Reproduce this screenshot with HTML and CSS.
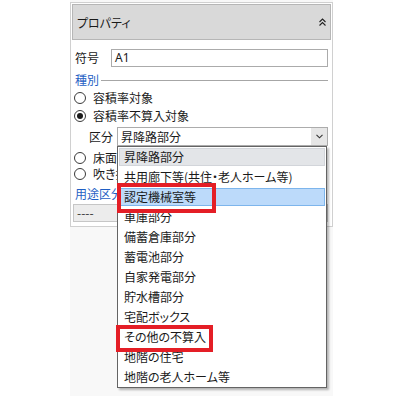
FILE: index.html
```html
<!DOCTYPE html>
<html lang="ja">
<head>
<meta charset="utf-8">
<link rel="stylesheet" href="styles.css">
</head>
<body>
<div class="pane">
  <div class="panel">
    <div class="header">
      <span class="title">プロパティ</span>
      <svg class="collapse" width="7" height="8" viewBox="0 0 7 8"><path d="M0.5 4 L3.5 1 L6.5 4 M0.5 7.5 L3.5 4.5 L6.5 7.5" fill="none" stroke="#222" stroke-width="1.1"/></svg>
    </div>
    <div class="body">
      <div class="row sign">
        <span class="label">符号</span>
        <div class="input">A1</div>
      </div>
      <div class="row group">
        <span class="group-title">種別</span>
        <span class="group-line"></span>
      </div>
      <div class="row radio-row tall"><span class="radio"></span><span>容積率対象</span></div>
      <div class="row radio-row tall"><span class="radio checked"></span><span>容積率不算入対象</span></div>
      <div class="row combo-row">
        <span class="label">区分</span>
        <div class="combo">
          <span class="combo-text">昇降路部分</span>
          <span class="combo-btn"><svg width="7" height="5" viewBox="0 0 7 5"><path d="M0.5 0.8 L3.5 3.8 L6.5 0.8" fill="none" stroke="#333" stroke-width="1.1"/></svg></span>
        </div>
      </div>
      <div class="row radio-row first-short"><span class="radio"></span><span>床面積不算入対象</span></div>
      <div class="row radio-row"><span class="radio"></span><span>吹き抜け</span></div>
      <div class="row group usage">
        <span class="group-title">用途区分</span>
      </div>
      <div class="select-box">----</div>
    </div>
  </div>

  <ul class="dropdown">
    <li class="item hover"><span>昇降路部分</span></li>
    <li class="item"><span>共用廊下等(共住・老人ホーム等)</span></li>
    <li class="item selected"><span>認定機械室等</span></li>
    <li class="item"><span>車庫部分</span></li>
    <li class="item"><span>備蓄倉庫部分</span></li>
    <li class="item"><span>蓄電池部分</span></li>
    <li class="item"><span>自家発電部分</span></li>
    <li class="item"><span>貯水槽部分</span></li>
    <li class="item"><span>宅配ボックス</span></li>
    <li class="item"><span>その他の不算入</span></li>
    <li class="item"><span>地階の住宅</span></li>
    <li class="item"><span>地階の老人ホーム等</span></li>
  </ul>

  <div class="mark mark-1"></div>
  <div class="mark mark-2"></div>
</div>
</body>
</html>
```

FILE: styles.css
```css
* { box-sizing: border-box; }

html, body {
  margin: 0;
  padding: 0;
  background: #ffffff;
}

body {
  font-family: "Noto Sans CJK JP", "Noto Sans", sans-serif;
  font-size: 12px;
  line-height: 18px;
  color: #1a1a1a;
  font-feature-settings: "palt";
}

.pane {
  position: relative;
  margin-left: 70px;
  width: 263px;
  height: 396px;
  padding-top: 2px;
  background: #f8f8f8;
}

.panel {
  width: 263px;
  height: 225px;
  border: 1px solid #d0d0d0;
  padding: 1px;
  background: #ffffff;
}

.header {
  display: flex;
  align-items: center;
  justify-content: space-between;
  height: 36px;
  border: 1px solid #b6b6b6;
  background: #d9d9d9;
  padding: 0 4px 0 4px;
}

.title {
  line-height: 18px;
  margin-top: 1px;
}

.collapse {
  display: block;
}

.body {
  padding: 9px 3px 0 1px;
}

.row {
  display: flex;
  align-items: center;
  margin-left: 2px;
}

.label {
  flex: none;
}

.sign {
  height: 18px;
}

.sign .label {
  width: 36px;
}

.input {
  flex: 1;
  height: 18px;
  border: 1px solid #ababab;
  padding-left: 3px;
  line-height: 16px;
  font-family: "Noto Sans", "Noto Sans CJK JP", sans-serif;
  font-size: 12px;
}

.group {
  height: 18px;
  margin-top: 4px;
}

.group-title {
  color: #1f5fc4;
  flex: none;
}

.group-line {
  flex: 1;
  height: 1px;
  background: #a6a6a6;
  margin-left: 2px;
  margin-top: 1px;
}

.radio-row {
  height: 16px;
}

.radio-row.tall {
  height: 18px;
}

.radio {
  flex: none;
  width: 12px;
  height: 12px;
  border: 1px solid #3a3a3a;
  border-radius: 50%;
  margin-left: -1px;
  margin-right: 7px;
  background: #fff;
  position: relative;
}

.radio.checked::after {
  content: "";
  position: absolute;
  left: 2px;
  top: 2px;
  width: 6px;
  height: 6px;
  border-radius: 50%;
  background: #1a1a1a;
}

.combo-row {
  margin-top: 2px;
  margin-left: 16px;
  height: 19px;
}

.combo-row .label {
  width: 28px;
}

.combo {
  flex: 1;
  display: flex;
  height: 19px;
  border: 1px solid #acacac;
  background: #fff;
}

.combo-text {
  flex: 1;
  padding-left: 3px;
  line-height: 17px;
}

.combo-btn {
  flex: none;
  width: 16px;
  display: flex;
  align-items: center;
  justify-content: center;
  background: #e6e6e6;
}

.first-short {
  margin-top: 4px;
}

.usage {
  margin-top: 3px;
}

.select-box {
  margin-top: 1px;
  height: 18px;
  border: 1px solid #c6c6c6;
  background: #ececec;
  padding-left: 3px;
  line-height: 16px;
  color: #333;
}

.dropdown {
  position: absolute;
  left: 47px;
  top: 146px;
  width: 210px;
  height: 242px;
  margin: 0;
  padding: 0;
  list-style: none;
  background: #fff;
  border: 1px solid #646464;
  box-shadow: 2px 2px 2px rgba(0, 0, 0, 0.28);
}

.item {
  height: 20px;
  padding: 1px;
}

.item span {
  display: block;
  height: 18px;
  border: 1px solid transparent;
  padding-left: 4px;
  line-height: 16px;
  white-space: nowrap;
}

.item.hover span {
  background: #e3e5e8;
  border-color: #d2d5da;
}

.item.selected span {
  background: #bcdafa;
  border-color: #7db5ec;
}

.mark {
  position: absolute;
  border: 4px solid #e41e26;
}

.mark-1 {
  left: 47px;
  top: 183px;
  width: 99px;
  height: 30px;
}

.mark-2 {
  left: 46px;
  top: 325px;
  width: 97px;
  height: 27px;
}
```
